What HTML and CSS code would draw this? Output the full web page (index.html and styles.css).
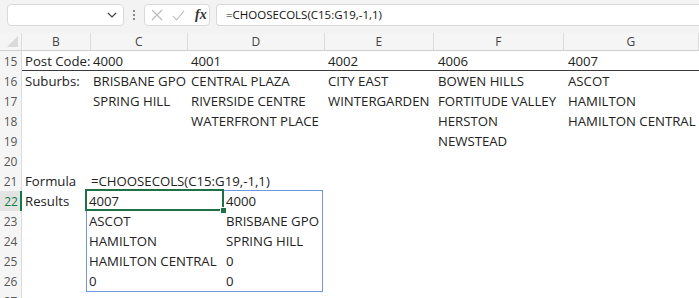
FILE: index.html
```html
<!DOCTYPE html>
<html lang="en">
<head>
<meta charset="UTF-8">
<meta name="viewport" content="width=device-width, initial-scale=1.0">
<title>CHOOSECOLS example</title>
<link rel="stylesheet" href="styles.css">
</head>
<body>

<div class="toolbar">
    <div class="namebox">
        <svg class="chevron" width="10" height="6" viewBox="0 0 10 6"><path d="M1 1 L5 5 L9 1" fill="none" stroke="#444" stroke-width="1.2"/></svg>
    </div>
    <div class="grip"><span></span><span></span><span></span></div>
    <div class="fxbox">
        <svg width="12" height="12" viewBox="0 0 12 12"><path d="M1 1 L11 11 M11 1 L1 11" stroke="#b9b9b9" stroke-width="1.1"/></svg>
        <svg width="13" height="11" viewBox="0 0 13 11"><path d="M1 6 L4.5 10 L12 1" fill="none" stroke="#b9b9b9" stroke-width="1.1"/></svg>
        <span class="fx">fx</span>
    </div>
    <div class="formula-input">=CHOOSECOLS(C15:G19,-1,1)</div>
</div>

<div class="colheads">
    <div class="corner"><span class="tri"></span></div>
    <div class="ch col-b">B</div>
    <div class="ch col-c">C</div>
    <div class="ch col-d">D</div>
    <div class="ch col-e">E</div>
    <div class="ch col-f">F</div>
    <div class="ch col-g">G</div>
</div>

<div class="sheet">
    <div class="rownums">
        <div>15</div><div>16</div><div>17</div><div>18</div><div>19</div><div>20</div><div>21</div>
        <div class="active">22</div><div>23</div><div>24</div><div>25</div><div>26</div><div>27</div>
    </div>

    <div class="cells">
        <div class="row heading">
            <div class="cell col-b">Post Code:</div>
            <div class="cell col-c">4000</div>
            <div class="cell col-d">4001</div>
            <div class="cell col-e">4002</div>
            <div class="cell col-f">4006</div>
            <div class="cell col-g">4007</div>
        </div>
        <div class="row">
            <div class="cell col-b">Suburbs:</div>
            <div class="cell col-c">BRISBANE GPO</div>
            <div class="cell col-d">CENTRAL PLAZA</div>
            <div class="cell col-e">CITY EAST</div>
            <div class="cell col-f">BOWEN HILLS</div>
            <div class="cell col-g">ASCOT</div>
        </div>
        <div class="row">
            <div class="cell col-b"></div>
            <div class="cell col-c">SPRING HILL</div>
            <div class="cell col-d">RIVERSIDE CENTRE</div>
            <div class="cell col-e">WINTERGARDEN</div>
            <div class="cell col-f">FORTITUDE VALLEY</div>
            <div class="cell col-g">HAMILTON</div>
        </div>
        <div class="row">
            <div class="cell col-b"></div>
            <div class="cell col-c"></div>
            <div class="cell col-d">WATERFRONT PLACE</div>
            <div class="cell col-e"></div>
            <div class="cell col-f">HERSTON</div>
            <div class="cell col-g">HAMILTON CENTRAL</div>
        </div>
        <div class="row">
            <div class="cell col-b"></div>
            <div class="cell col-c"></div>
            <div class="cell col-d"></div>
            <div class="cell col-e"></div>
            <div class="cell col-f">NEWSTEAD</div>
        </div>
        <div class="row"></div>
        <div class="row">
            <div class="cell col-b">Formula</div>
            <div class="cell overflow">=CHOOSECOLS(C15:G19,-1,1)</div>
        </div>

        <div class="results">
            <div class="label-col">
                <div class="cell">Results</div>
            </div>
            <div class="spill">
                <div class="srow"><div class="cell s1 selected">4007<span class="handle"></span></div><div class="cell s2">4000</div></div>
                <div class="srow"><div class="cell s1">ASCOT</div><div class="cell s2">BRISBANE GPO</div></div>
                <div class="srow"><div class="cell s1">HAMILTON</div><div class="cell s2">SPRING HILL</div></div>
                <div class="srow"><div class="cell s1">HAMILTON CENTRAL</div><div class="cell s2">0</div></div>
                <div class="srow"><div class="cell s1">0</div><div class="cell s2">0</div></div>
            </div>
        </div>
    </div>
</div>

</body>
</html>
```

FILE: styles.css
```css
body {
    margin: 0;
    width: 699px;
    height: 298px;
    overflow: hidden;
    background-color: #fff;
    font-family: "Open Sans", "Noto Sans", sans-serif;
    color: #222;
}

/* formula bar */
.toolbar {
    height: 33px;
    box-sizing: border-box;
    padding: 4px 0 0 7px;
    display: flex;
    align-items: flex-start;
    background-color: #f3f3f3;
}
.namebox {
    width: 117px;
    height: 22px;
    box-sizing: border-box;
    background-color: #fff;
    border: 1px solid #d9d9d9;
    border-radius: 4px;
    display: flex;
    align-items: center;
    justify-content: flex-end;
    padding-right: 6px;
}
.grip {
    width: 20px;
    height: 22px;
    display: flex;
    flex-direction: column;
    align-items: center;
    justify-content: center;
    gap: 2px;
}
.grip span {
    width: 2px;
    height: 2px;
    background-color: #8a8a8a;
}
.fxbox {
    width: 66px;
    height: 22px;
    box-sizing: border-box;
    background-color: #fff;
    border: 1px solid #d9d9d9;
    border-radius: 4px;
    display: flex;
    align-items: center;
    gap: 9px;
    padding-left: 6px;
}
.fx {
    font-family: "Liberation Serif", serif;
    font-style: italic;
    font-weight: bold;
    font-size: 14px;
    color: #333;
    margin-left: 1px;
}
.formula-input {
    flex: 1;
    height: 22px;
    box-sizing: border-box;
    margin-left: 6px;
    background-color: #fff;
    border: 1px solid #d9d9d9;
    border-right: none;
    border-radius: 4px 0 0 4px;
    padding-left: 9px;
    font-size: 11.5px;
    line-height: 20px;
    color: #111;
}

/* column headers */
.colheads {
    height: 18px;
    box-sizing: border-box;
    display: flex;
    background-color: #f5f5f5;
    border-bottom: 1px solid #cfcfcf;
}
.corner {
    width: 22px;
    position: relative;
    border-right: 1px solid #dcdcdc;
    box-sizing: border-box;
}
.tri {
    position: absolute;
    right: 3px;
    bottom: 3px;
    width: 0;
    height: 0;
    border-left: 11px solid transparent;
    border-bottom: 11px solid #dadada;
}
.ch {
    box-sizing: border-box;
    border-right: 1px solid #dcdcdc;
    text-align: center;
    font-size: 12px;
    line-height: 17px;
    color: #444;
}
.col-b { width: 69px; }
.col-c { width: 98px; }
.col-d { width: 137px; }
.col-e { width: 110px; }
.col-f { width: 130px; }
.col-g { width: 136px; }

/* grid */
.sheet {
    display: flex;
}
.rownums {
    width: 22px;
    flex-shrink: 0;
    background-color: #f5f5f5;
    border-right: 1px solid #dcdcdc;
    box-sizing: border-box;
}
.rownums div {
    height: 20px;
    line-height: 21px;
    text-align: center;
    font-size: 12px;
    color: #555;
}
.rownums .active {
    background-color: #e3e3e3;
    color: #107c41;
    box-shadow: inset -2px 0 0 #107c41;
    margin-right: -1px;
}
.cells {
    flex: 1;
}
.row {
    height: 20px;
    display: flex;
}
.row.heading {
    box-shadow: inset 0 -1px 0 #3a3a3a;
}
.cell {
    height: 20px;
    box-sizing: border-box;
    padding-left: 2px;
    font-size: 13.2px;
    line-height: 21px;
    white-space: nowrap;
}
.row .col-b,
.label-col .cell {
    padding-left: 3px;
}
.overflow {
    padding-left: 0;
}

/* results spill range */
.results {
    display: flex;
    align-items: flex-start;
}
.label-col {
    width: 64px;
}
.spill {
    margin-top: -1px;
    border: 1px solid #7096db;
}
.srow {
    display: flex;
}
.s1 { width: 137px; }
.s2 { width: 98px; }
.selected {
    position: relative;
}
.selected::after {
    content: "";
    position: absolute;
    left: -2px;
    top: -2px;
    right: 0;
    bottom: 0;
    border: 2px solid #1e7145;
}
.handle {
    position: absolute;
    right: -3px;
    bottom: -3px;
    width: 5px;
    height: 5px;
    background-color: #1e7145;
    border: 1px solid #fff;
    z-index: 1;
}
```
